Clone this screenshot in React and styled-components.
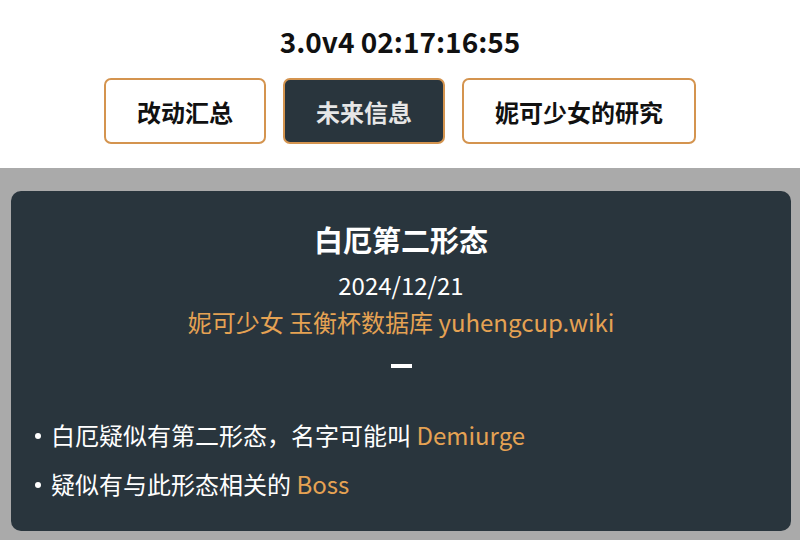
import React from "react";
import styled, { createGlobalStyle } from "styled-components";

const GlobalStyle = createGlobalStyle`
  html, body {
    margin: 0;
    padding: 0;
    background: #ffffff;
    font-family: "Noto Sans CJK SC", "Noto Sans", sans-serif;
  }
`;

const tabs = [
  { label: "改动汇总", active: false },
  { label: "未来信息", active: true },
  { label: "妮可少女的研究", active: false },
];

const notes = [
  { text: "白厄疑似有第二形态，名字可能叫", accent: "Demiurge" },
  { text: "疑似有与此形态相关的", accent: "Boss" },
];

export default function App() {
  return (
    <>
      <GlobalStyle />
      <StyledHeader>
        <StyledVersion>3.0v4 02:17:16:55</StyledVersion>
        <StyledTabs>
          {tabs.map((tab) => (
            <StyledTab key={tab.label} $active={tab.active}>
              {tab.label}
            </StyledTab>
          ))}
        </StyledTabs>
      </StyledHeader>
      <StyledBody>
        <StyledCard>
          <StyledCardTitle>白厄第二形态</StyledCardTitle>
          <StyledDate>2024/12/21</StyledDate>
          <StyledSource>妮可少女 玉衡杯数据库 yuhengcup.wiki</StyledSource>
          <StyledDash />
          <StyledList>
            {notes.map((note) => (
              <StyledItem key={note.accent}>
                {note.text} <StyledAccent>{note.accent}</StyledAccent>
              </StyledItem>
            ))}
          </StyledList>
        </StyledCard>
      </StyledBody>
    </>
  );
}

const StyledHeader = styled.header`
  display: flex;
  flex-direction: column;
  align-items: center;
  padding: 22px 0 24px;
  background: #ffffff;
`;

const StyledVersion = styled.h1`
  margin: 0;
  font-size: 28px;
  line-height: 38px;
  font-weight: 700;
  color: #111111;
`;

const StyledTabs = styled.nav`
  display: flex;
  gap: 17px;
  margin-top: 18px;
`;

const StyledTab = styled.button`
  display: flex;
  align-items: center;
  justify-content: center;
  height: 66px;
  padding: 0 31px;
  border: 2px solid #d4944f;
  border-radius: 7px;
  background: ${(p) => (p.$active ? "#29353d" : "#ffffff")};
  color: ${(p) => (p.$active ? "#e6e6e6" : "#111111")};
  font-family: inherit;
  font-size: 24px;
  font-weight: 700;
  cursor: pointer;
`;

const StyledBody = styled.main`
  background: #aaaaaa;
  padding: 23px 9px 10px 11px;
  min-height: 372px;
  box-sizing: border-box;
`;

const StyledCard = styled.section`
  display: flex;
  flex-direction: column;
  align-items: center;
  background: #29353d;
  border-radius: 10px;
  padding: 26px 24px 29px;
  color: #ffffff;
`;

const StyledCardTitle = styled.h2`
  margin: 0;
  font-size: 29px;
  line-height: 44px;
  font-weight: 700;
`;

const StyledDate = styled.div`
  margin-top: 7px;
  font-size: 24px;
  line-height: 34px;
`;

const StyledSource = styled.div`
  margin-top: 3px;
  font-size: 24px;
  line-height: 34px;
  color: #e5a253;
`;

const StyledDash = styled.div`
  width: 21px;
  height: 4px;
  margin-top: 25px;
  background: #ffffff;
`;

const StyledList = styled.ul`
  align-self: stretch;
  display: flex;
  flex-direction: column;
  gap: 13px;
  margin: 49px 0 0;
  padding: 0;
  list-style: none;
`;

const StyledItem = styled.li`
  display: flex;
  align-items: center;
  font-size: 24px;
  line-height: 36px;
  white-space: pre;

  &::before {
    content: "";
    width: 6px;
    height: 6px;
    margin: 2px 10px 0 0;
    border-radius: 50%;
    background: #ffffff;
  }
`;

const StyledAccent = styled.span`
  color: #e5a253;
`;
